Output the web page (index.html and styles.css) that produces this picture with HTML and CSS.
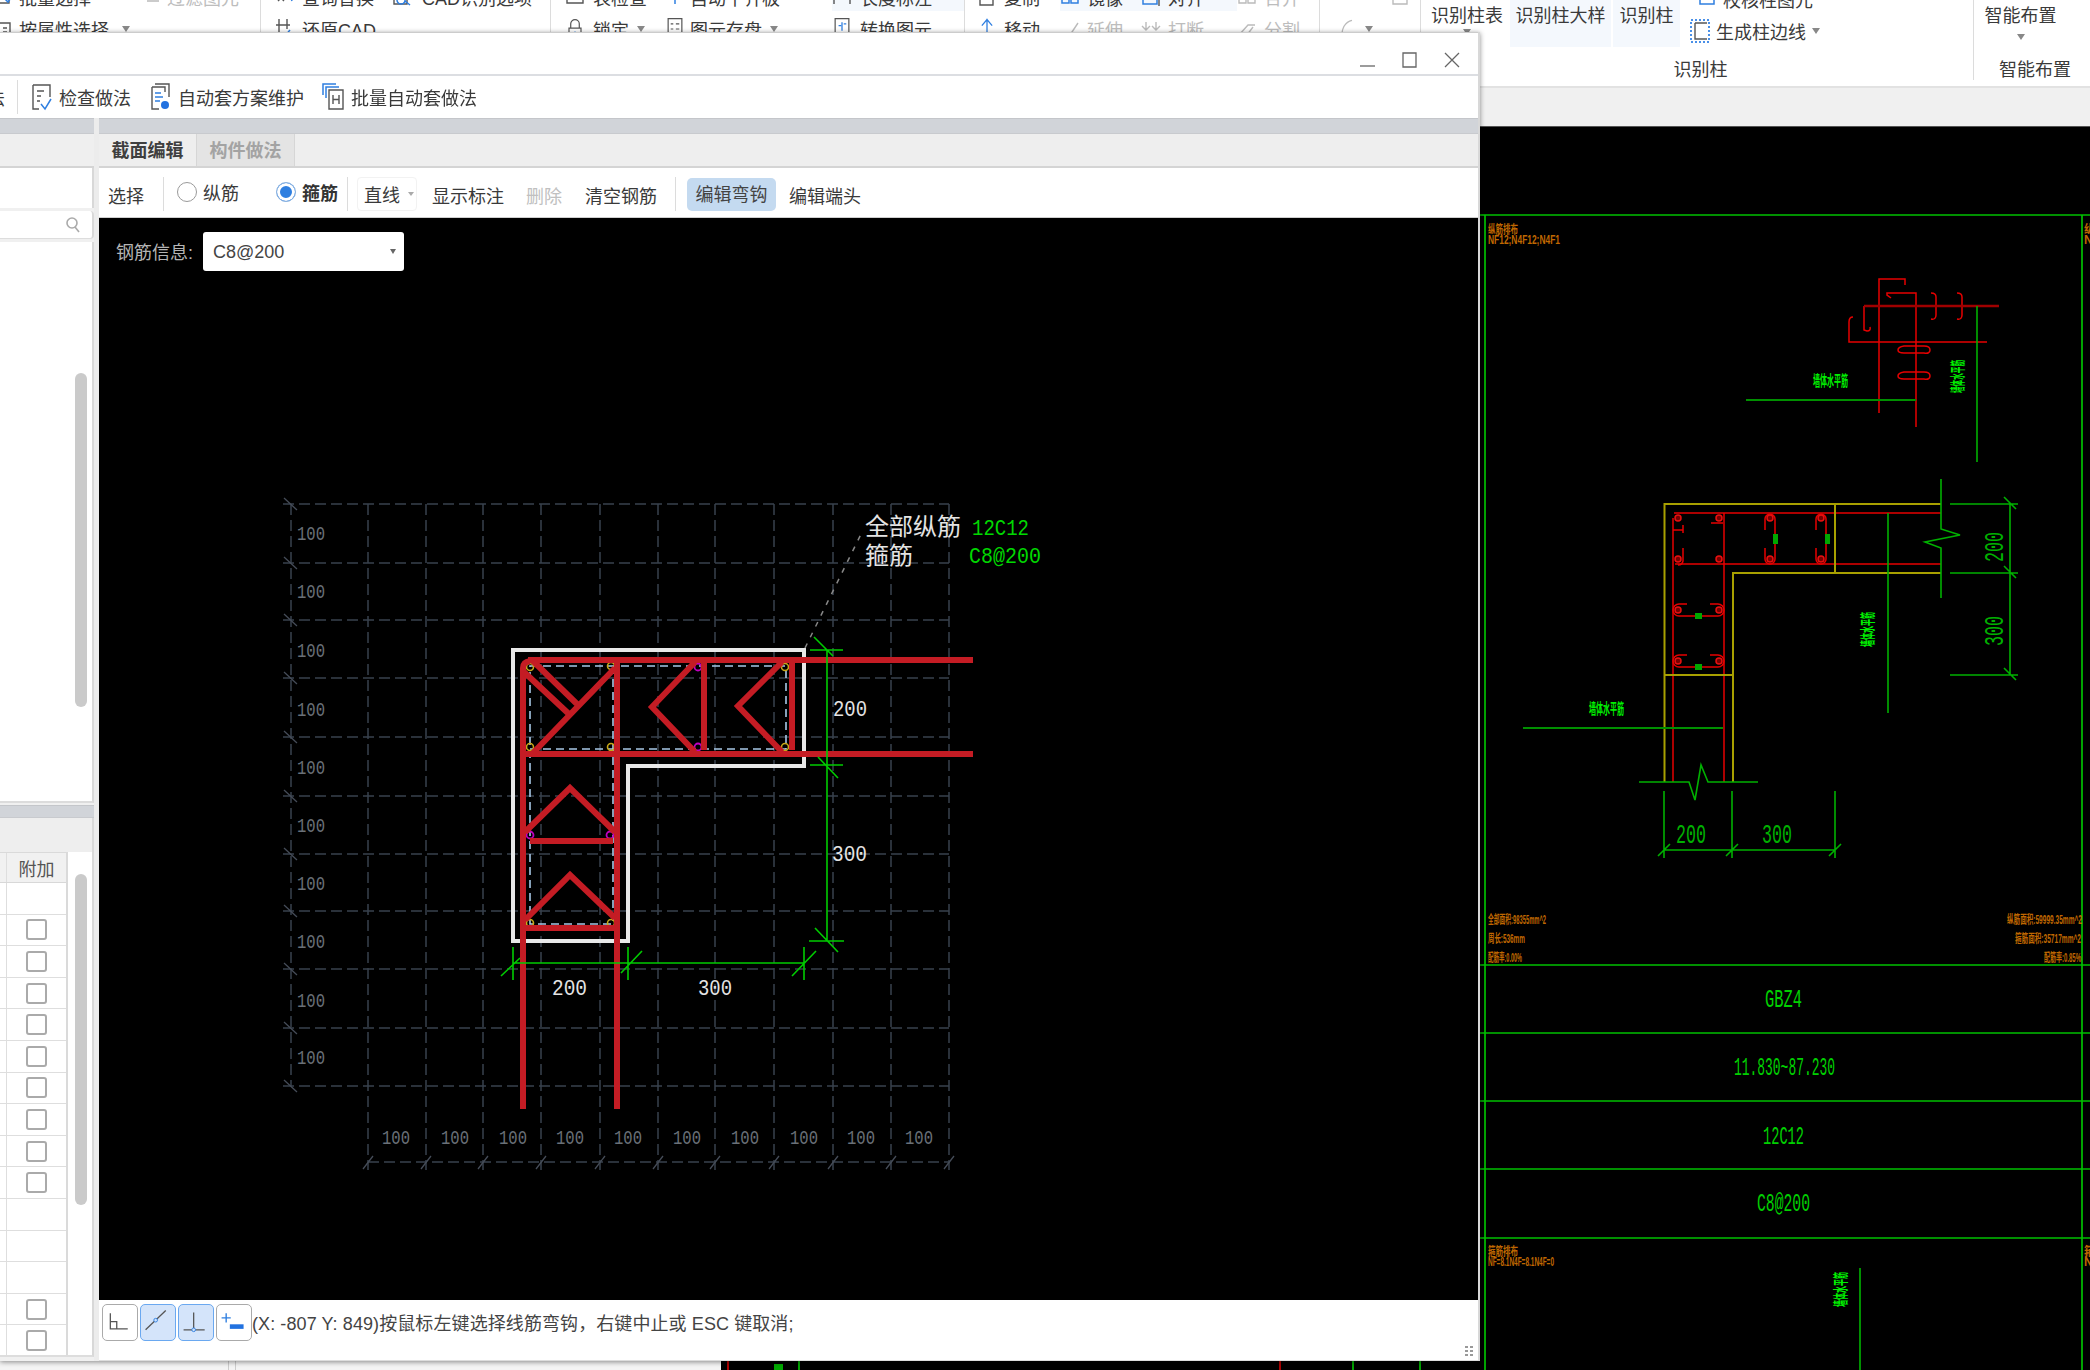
FILE: index.html
```html
<!DOCTYPE html>
<html lang="zh-CN">
<head>
<meta charset="utf-8">
<title>截面编辑</title>
<link rel="stylesheet" href="styles.css">
</head>
<body>
<div class="screen">
  <header class="ribbon">
    <section class="rb-group g1">
      <div class="rb-rows">
        <div class="rb-item"><svg class="ico-s" viewBox="0 0 13 20"><path d="M0 6h9v10H0" class="ln"/><path d="M5 12l3 3 5-7" class="bl"/></svg>批量选择</div>
        <div class="rb-item"><svg class="ico-s" viewBox="0 0 13 20"><path d="M0 4h10v14H0M3 9h4M3 13h4" class="ln"/></svg>按属性选择<i class="caret caret-far"></i></div>
        <div class="rb-item off"><svg class="ico-m" viewBox="0 0 15 20"><path d="M1 4h12M1 9h9M1 14h12" class="lnf"/></svg>过滤图元</div>
        <div class="rb-item"></div>
      </div>
    </section>
    <section class="rb-group g2">
      <div class="rb-rows">
        <div class="rb-item"><svg class="ico" viewBox="0 0 20 20"><path d="M3 14l6-6M9 14l-6-6" class="ln"/><path d="M13 4l4 10" class="bl"/></svg>查询替换</div>
        <div class="rb-item"><svg class="ico" viewBox="0 0 20 24"><path d="M4 2v20M1 8h14M12 2v10" class="ln"/><path d="M9 20l6-7" class="bl"/></svg>还原CAD</div>
        <div class="rb-item"><svg class="ico" viewBox="0 0 20 20"><path d="M2 4h13v13H2z" class="ln"/><path d="M9 9a4 4 0 1 0 .1 0M13 14l5 4" class="bl"/></svg><span class="t-gap">CAD识别选项</span></div>
        <div class="rb-item"></div>
      </div>
    </section>
    <section class="rb-group g3">
      <div class="rb-rows">
        <div class="rb-item"><svg class="ico" viewBox="0 0 20 20"><path d="M2 6h16v10H2z" class="ln"/></svg>表检查</div>
        <div class="rb-item"><svg class="ico" viewBox="0 0 20 28"><path d="M5 13V8a5 5 0 0 1 10 0v5M3 13h14v12H3z" class="ln"/><path d="M10 17v4" class="bl"/></svg>锁定<i class="caret"></i></div>
        <div class="rb-item"><svg class="ico" viewBox="0 0 20 20"><path d="M6 3l4 9M14 3l-4 9" class="ln"/><path d="M10 3v14" class="bl"/></svg><span class="t-tight">自动平齐板</span></div>
        <div class="rb-item"><svg class="ico" viewBox="0 0 20 28"><path d="M2 2h16v24H2zM5 8h3M11 8h4M5 14h3M11 14h4" class="ln"/></svg><span class="t-tight">图元存盘</span><i class="caret"></i></div>
        <div class="rb-item hl"><svg class="ico" viewBox="0 0 20 20"><path d="M2 3v14M2 10h16M18 3v14" class="ln"/></svg>长度标注</div>
        <div class="rb-item"><svg class="ico" viewBox="0 0 20 28"><path d="M2 2h16v24H2z" class="ln"/><path d="M10 6v10M6 10h3M12 8h3" class="bl"/></svg>转换图元</div>
      </div>
    </section>
    <section class="rb-group g4">
      <div class="rb-rows">
        <div class="rb-item"><svg class="ico" viewBox="0 0 20 20"><path d="M3 4h13v14H3z" class="ln"/></svg>复制</div>
        <div class="rb-item"><svg class="ico" viewBox="0 0 20 28"><path d="M10 2v22M4 10l6-7 6 7M2 22l4-4M18 22l-4-4" class="bl"/></svg>移动</div>
        <div class="rb-item hl"><svg class="ico" viewBox="0 0 20 20"><path d="M2 4h7v12H2zM11 4h7v12h-7z" class="bl"/></svg>镜像</div>
        <div class="rb-item off"><svg class="ico" viewBox="0 0 20 20"><path d="M1 16h8M10 16l8-12" class="lnf"/></svg>延伸</div>
        <div class="rb-item hl"><svg class="ico" viewBox="0 0 20 20"><path d="M2 4h14v13H2z" class="bl"/><path d="M18 2v17" class="ln"/></svg>对齐</div>
        <div class="rb-item off"><svg class="ico" viewBox="0 0 20 20"><path d="M5 3v8M1 7l4 4 4-4M15 3v8M11 7l4 4 4-4M1 16h18" class="lnf"/></svg>打断</div>
        <div class="rb-item off"><svg class="ico" viewBox="0 0 20 20"><path d="M2 4h7v12H2zM11 4h7v12h-7z" class="lnf"/></svg>合并</div>
        <div class="rb-item off"><svg class="ico" viewBox="0 0 20 20"><path d="M2 16l9-10h7M4 16h6l6-8" class="lnf"/></svg>分割</div>
      </div>
    </section>
    <section class="rb-group g5">
      <div class="rb-rows">
        <div class="rb-item"><svg class="ico" viewBox="0 0 20 20"><path d="M10 4a6 6 0 0 1 6 6M12 2l-3 2 3 3" class="lnf"/></svg></div>
        <div class="rb-item"><svg class="ico" viewBox="0 0 20 28"><path d="M5 24C5 12 9 6 17 4" class="lnf"/></svg><i class="caret caret-r"></i></div>
        <div class="rb-item"><svg class="ico" viewBox="0 0 20 20"><path d="M3 3h14v14H3z" class="lnf"/></svg></div>
        <div class="rb-item"></div>
      </div>
    </section>
    <section class="rb-group g6">
      <div class="rb-top">
        <div class="big-btn b-a"><span>识别柱表</span><i class="caret"></i></div>
        <div class="big-btn b-b hl"><span>识别柱大样</span></div>
        <div class="big-btn b-c hl"><span>识别柱</span></div>
        <div class="rb-stack">
          <div class="rb-item"><svg class="ico" viewBox="0 0 20 20"><path d="M3 5h14v10H3z" class="bl"/></svg>校核柱图元</div>
          <div class="rb-item"><svg class="ico" viewBox="0 0 20 24"><path d="M1 1h18v22H1z" class="dot"/><path d="M5 4h12M5 4v16h12" class="ln"/></svg>生成柱边线<i class="caret"></i></div>
        </div>
      </div>
      <div class="rb-label">识别柱</div>
    </section>
    <section class="rb-group g7">
      <div class="rb-top">
        <div class="big-btn b-d"><span>智能布置</span><i class="caret caret-low"></i></div>
      </div>
      <div class="rb-label">智能布置</div>
    </section>
  </header>
  <div class="rb-band"></div>
  <main class="workspace">
    <div class="ws-left">
      <div class="ws-left-a"></div>
      <div class="ws-left-b"></div>
    </div>
    <div class="ws-cad">
      <svg class="cad-svg" viewBox="721 127 1369 1243" preserveAspectRatio="none">
        <g class="k-frame">
          <path d="M1485 215V1370M2082 215V1370M1480 215H2090M1480 965H2090M1480 1033H2090M1480 1101H2090M1480 1169H2090M1480 1238H2090"/>
        </g>
        <g class="k-red">
          <path d="M1905 285v-6h-26V413"/>
          <path d="M1891 298l-4-3v-2h29V427"/>
          <path d="M1931 319q5 1 5-4v-18q0-4-5-4M1957 319q5 1 5-4v-18q0-4-5-4"/>
          <path d="M1904 346h20q6 0 6 4t-6 3h-20q-6 0-6-3t6-4zM1904 372h20q6 0 6 4t-6 3h-20q-6 0-6-3t6-4z"/>
          <path d="M1853 317q-4 0-4 5v20h138"/>
          <path d="M1864 306v24l3 1q4 0 3-4"/>
          <path class="k-dred" d="M1864 306h135"/>
          <path d="M1674 513H1941M1675 564H1941M1724 513V782"/>
          <path d="M1673 518V782"/>
          <path d="M1673 530h10M1683 525v8M1711 523h12M1683 548v13a5 5 0 0 1-5 4"/>
          <path d="M1765 530v-11a5 5 0 0 1 10 0v40a5 5 0 0 1-10 0v-11"/>
          <path d="M1816 530v-11a5 5 0 0 1 10 0v40a5 5 0 0 1-10 0v-11"/>
          <path d="M1687 604h-8a6 6 0 0 0 0 12h39a6 6 0 0 0 0-12h-8"/>
          <path d="M1687 655h-8a6 6 0 0 0 0 12h39a6 6 0 0 0 0-12h-8"/>
          <circle cx="1678" cy="518" r="3"/><circle cx="1719" cy="518" r="3"/>
          <circle cx="1678" cy="559" r="3"/><circle cx="1719" cy="559" r="3"/>
          <circle cx="1770" cy="518" r="3"/><circle cx="1821" cy="518" r="3"/>
          <circle cx="1770" cy="559" r="3"/><circle cx="1821" cy="559" r="3"/>
          <circle cx="1678" cy="610" r="3"/><circle cx="1719" cy="610" r="3"/>
          <circle cx="1678" cy="661" r="3"/><circle cx="1719" cy="661" r="3"/>
        </g>
        <g class="k-yellow">
          <path d="M1941 504H1664.500V782M1941 573H1733V782M1835 504V573M1664 675H1732"/>
        </g>
        <g class="k-green">
          <path d="M1977 306V462M1941 479V529L1960 535L1925 542L1941 548V598"/>
          <path d="M1950 504H2018M1950 573H2018M1950 675H2018M2010 504V675M2004 497l12 12M2004 566l12 12M2004 668l12 12"/>
          <path d="M1888 513V713"/>
          <path d="M1639 782H1689L1695 800L1701 765L1708 782H1758"/>
          <path d="M1664 791V858M1732 791V858M1835 791V858M1664 850H1835M1658 856l12-12M1726 856l12-12M1829 856l12-12"/>
        </g>
        <g class="k-dgreen"><path d="M1746 400H1916M1523 728H1723"/></g>
        <g class="k-blob">
          <rect x="1773" y="534" width="5" height="10"/><rect x="1825" y="534" width="5" height="10"/>
          <rect x="1695" y="613" width="7" height="6"/><rect x="1695" y="664" width="7" height="6"/>
        </g>
        <g class="t-dim">
          <text x="1691" y="843" font-size="28" textLength="30" lengthAdjust="spacingAndGlyphs" text-anchor="middle">200</text>
          <text x="1777" y="843" font-size="28" textLength="30" lengthAdjust="spacingAndGlyphs" text-anchor="middle">300</text>
          <text transform="translate(2003 547) rotate(-90)" font-size="28" textLength="30" lengthAdjust="spacingAndGlyphs" text-anchor="middle">200</text>
          <text transform="translate(2003 631) rotate(-90)" font-size="28" textLength="30" lengthAdjust="spacingAndGlyphs" text-anchor="middle">300</text>
        </g>
        <g class="t-tbl">
          <text x="1765" y="1007" font-size="26" textLength="37" lengthAdjust="spacingAndGlyphs">GBZ4</text>
          <text x="1734" y="1075" font-size="26" textLength="101" lengthAdjust="spacingAndGlyphs">11.830~87.230</text>
          <text x="1763" y="1144" font-size="26" textLength="41" lengthAdjust="spacingAndGlyphs">12C12</text>
          <text x="1757" y="1211" font-size="26" textLength="53" lengthAdjust="spacingAndGlyphs">C8@200</text>
        </g>
        <g class="t-lab">
          <text x="1813" y="386" font-size="15" textLength="35" lengthAdjust="spacingAndGlyphs">墙体水平筋</text>
          <text x="1589" y="714" font-size="15" textLength="35" lengthAdjust="spacingAndGlyphs">墙体水平筋</text>
          <text transform="translate(1963 393) rotate(-90)" font-size="15" textLength="33" lengthAdjust="spacingAndGlyphs">墙体水平筋</text>
          <text transform="translate(1873 647) rotate(-90)" font-size="15" textLength="35" lengthAdjust="spacingAndGlyphs">墙体水平筋</text>
          <text transform="translate(1846 1307) rotate(-90)" font-size="15" textLength="35" lengthAdjust="spacingAndGlyphs">墙体水平筋</text>
        </g>
        <path class="k-dgreen" d="M1860 1268V1370"/>
        <g class="t-or">
          <text x="1488" y="234" textLength="30" lengthAdjust="spacingAndGlyphs">纵筋排布</text>
          <text x="1488" y="244" textLength="72" lengthAdjust="spacingAndGlyphs">NF12;N4F12;N4F1</text>
          <text x="2084" y="234">纵</text>
          <text x="2084" y="244">N</text>
          <text x="1488" y="924" textLength="58" lengthAdjust="spacingAndGlyphs">全部面积:98355mm^2</text>
          <text x="1488" y="943" textLength="37" lengthAdjust="spacingAndGlyphs">周长:536mm</text>
          <text x="1488" y="962" textLength="34" lengthAdjust="spacingAndGlyphs">配筋率:0.00%</text>
          <text x="2007" y="924" textLength="75" lengthAdjust="spacingAndGlyphs">纵筋面积:59999.35mm^2</text>
          <text x="2015" y="943" textLength="66" lengthAdjust="spacingAndGlyphs">箍筋面积:35717mm^2</text>
          <text x="2044" y="962" textLength="37" lengthAdjust="spacingAndGlyphs">配筋率:0.85%</text>
          <text x="1488" y="1256" textLength="30" lengthAdjust="spacingAndGlyphs">箍筋排布</text>
          <text x="1488" y="1266" textLength="66" lengthAdjust="spacingAndGlyphs">NF=8.1N4F=8.1N4F=0</text>
          <text x="2084" y="1256">箍</text>
          <text x="2084" y="1266">N</text>
        </g>
        <g class="k-frame">
          <path d="M799 1361V1370M1353 1361V1370M1420 1361V1370"/>
        </g>
        <path class="k-red" d="M728 1361V1370M1280 1361V1370"/>
        <rect class="k-blob" x="774" y="1364" width="9" height="6"/>
      </svg>
    </div>
  </main>

  <div class="dialog">
    <div class="d-title">
      <svg class="win-ico" viewBox="0 0 16 16"><path d="M0 14H15"/></svg>
      <svg class="win-ico" viewBox="0 0 16 16"><path d="M1 1H14V15H1Z"/></svg>
      <svg class="win-ico" viewBox="0 0 16 16"><path d="M1 1L15 15M15 1L1 15"/></svg>
    </div>
    <div class="d-tools">
      <span class="cut-text">法</span>
      <i class="sep sep-first"></i>
      <div class="d-tool">
        <svg class="tool-ico" viewBox="0 0 22 28"><path d="M3 2H20V14M3 2V26H9M7 8H14M7 13H11M7 18H10" class="ln"/><path d="M11 21L15 26L21 16" class="bl"/></svg>
        <span>检查做法</span>
      </div>
      <div class="d-tool">
        <svg class="tool-ico" viewBox="0 0 22 28"><path d="M6 1H20V14M3 4H16V9M3 4V26H10" class="ln"/><path d="M6 10H12M6 14H14M6 18H11" class="bl"/><circle cx="16" cy="22" r="4" class="bl-f"/></svg>
        <span>自动套方案维护</span>
      </div>
      <div class="d-tool">
        <svg class="tool-ico" viewBox="0 0 22 28"><path d="M1 12V1H14" class="bl"/><path d="M4 15V4H17" class="bl"/><path d="M7 7H21V26H7Z" class="ln"/><path d="M11 12V21M17 12V21M11 16.500H17" class="ln"/></svg>
        <span>批量自动套做法</span>
      </div>
    </div>
    <div class="d-body">
      <aside class="side">
        <div class="band"></div>
        <div class="side-head"></div>
        <div class="side-box"></div>
        <div class="side-search">
          <svg class="search-ico" viewBox="0 0 14 16"><circle cx="6" cy="6" r="5"/><path d="M9 10L13 15"/></svg>
        </div>
        <div class="side-list"><div class="thumb thumb-a"></div></div>
        <div class="band band-low"></div>
        <div class="side-head side-head-low"></div>
        <div class="side-table">
          <div class="t-cols">
            <div class="t-head"><i class="c-a"></i><span class="c-b">附加</span></div>
            <div class="t-row"><i class="c-a"></i><span class="c-b"></span></div>
            <div class="t-row"><i class="c-a"></i><span class="c-b"><b class="chk"></b></span></div>
            <div class="t-row"><i class="c-a"></i><span class="c-b"><b class="chk"></b></span></div>
            <div class="t-row"><i class="c-a"></i><span class="c-b"><b class="chk"></b></span></div>
            <div class="t-row"><i class="c-a"></i><span class="c-b"><b class="chk"></b></span></div>
            <div class="t-row"><i class="c-a"></i><span class="c-b"><b class="chk"></b></span></div>
            <div class="t-row"><i class="c-a"></i><span class="c-b"><b class="chk"></b></span></div>
            <div class="t-row"><i class="c-a"></i><span class="c-b"><b class="chk"></b></span></div>
            <div class="t-row"><i class="c-a"></i><span class="c-b"><b class="chk"></b></span></div>
            <div class="t-row"><i class="c-a"></i><span class="c-b"><b class="chk"></b></span></div>
            <div class="t-row"><i class="c-a"></i><span class="c-b"></span></div>
            <div class="t-row"><i class="c-a"></i><span class="c-b"></span></div>
            <div class="t-row"><i class="c-a"></i><span class="c-b"></span></div>
            <div class="t-row"><i class="c-a"></i><span class="c-b"><b class="chk"></b></span></div>
            <div class="t-row"><i class="c-a"></i><span class="c-b"><b class="chk"></b></span></div>
          </div>
          <div class="t-scroll"><div class="thumb thumb-b"></div></div>
        </div>
      </aside>
      <div class="gutter"></div>
      <section class="editor">
        <div class="band"></div>
        <nav class="tabs">
          <span class="tab tab-on">截面编辑</span>
          <span class="tab tab-off">构件做法</span>
        </nav>
        <div class="e-tools">
          <span class="e-select">选择</span>
          <i class="sep sep-a"></i>
          <label class="radio radio-a"><i class="radio-dot"></i><span>纵筋</span></label>
          <label class="radio radio-b"><i class="radio-dot radio-on"></i><span class="strong">箍筋</span></label>
          <i class="sep sep-b"></i>
          <span class="linetype">直线<i class="caret"></i></span>
          <span class="e-btn e-show">显示标注</span>
          <span class="e-btn e-del">删除</span>
          <span class="e-btn e-clear">清空钢筋</span>
          <i class="sep sep-c"></i>
          <span class="e-active">编辑弯钩</span>
          <span class="e-btn e-end">编辑端头</span>
        </div>
        <div class="canvas">
          <svg class="canvas-svg" viewBox="99 218 1379 1082" preserveAspectRatio="none">
            <g class="c-grid">
              <path d="M283 504H949M283 563H949M283 620H949M283 678H949M283 737H949M283 796H949M283 854H949M283 911H949M283 969H949M283 1028H949M283 1086H949"/>
              <path d="M291 504V1086M368 504V1170M426 504V1170M483 504V1170M541 504V1170M600 504V1170M658 504V1170M715 504V1170M774 504V1170M833 504V1170M891 504V1170M949 504V1170"/>
              <path d="M368 1162H949"/>
            </g>
            <path class="c-tick" d="M284 498l13 12M284 557l13 12M284 614l13 12M284 672l13 12M284 731l13 12M284 790l13 12M284 848l13 12M284 905l13 12M284 963l13 12M284 1022l13 12M284 1080l13 12M363 1169l10-13M421 1169l10-13M478 1169l10-13M536 1169l10-13M595 1169l10-13M653 1169l10-13M710 1169l10-13M769 1169l10-13M828 1169l10-13M886 1169l10-13M944 1169l10-13"/>
            <g class="t-grid">
              <text x="297" y="540" textLength="28" lengthAdjust="spacingAndGlyphs">100</text>
              <text x="297" y="598" textLength="28" lengthAdjust="spacingAndGlyphs">100</text>
              <text x="297" y="657" textLength="28" lengthAdjust="spacingAndGlyphs">100</text>
              <text x="297" y="716" textLength="28" lengthAdjust="spacingAndGlyphs">100</text>
              <text x="297" y="774" textLength="28" lengthAdjust="spacingAndGlyphs">100</text>
              <text x="297" y="832" textLength="28" lengthAdjust="spacingAndGlyphs">100</text>
              <text x="297" y="890" textLength="28" lengthAdjust="spacingAndGlyphs">100</text>
              <text x="297" y="948" textLength="28" lengthAdjust="spacingAndGlyphs">100</text>
              <text x="297" y="1007" textLength="28" lengthAdjust="spacingAndGlyphs">100</text>
              <text x="297" y="1064" textLength="28" lengthAdjust="spacingAndGlyphs">100</text>
              <text x="382" y="1144" textLength="28" lengthAdjust="spacingAndGlyphs">100</text>
              <text x="441" y="1144" textLength="28" lengthAdjust="spacingAndGlyphs">100</text>
              <text x="499" y="1144" textLength="28" lengthAdjust="spacingAndGlyphs">100</text>
              <text x="556" y="1144" textLength="28" lengthAdjust="spacingAndGlyphs">100</text>
              <text x="614" y="1144" textLength="28" lengthAdjust="spacingAndGlyphs">100</text>
              <text x="673" y="1144" textLength="28" lengthAdjust="spacingAndGlyphs">100</text>
              <text x="731" y="1144" textLength="28" lengthAdjust="spacingAndGlyphs">100</text>
              <text x="790" y="1144" textLength="28" lengthAdjust="spacingAndGlyphs">100</text>
              <text x="847" y="1144" textLength="28" lengthAdjust="spacingAndGlyphs">100</text>
              <text x="905" y="1144" textLength="28" lengthAdjust="spacingAndGlyphs">100</text>
            </g>
            <path class="c-outline" d="M804 650H513V941H628V766H804Z"/>
            <path class="c-inner" d="M530 666H786V749H613V924H530ZM530 749H613M613 666V749"/>
            <g class="c-yel">
              <circle cx="530" cy="667" r="3.500"/><circle cx="611" cy="666" r="3.500"/><circle cx="530" cy="747" r="3.500"/><circle cx="611" cy="747" r="3.500"/>
              <circle cx="785" cy="667" r="3.500"/><circle cx="785" cy="747" r="3.500"/><circle cx="530" cy="923" r="3.500"/><circle cx="611" cy="923" r="3.500"/>
            </g>
            <g class="c-mag">
              <circle cx="698" cy="667" r="3.500"/><circle cx="698" cy="747" r="3.500"/><circle cx="530" cy="835" r="3.500"/><circle cx="610" cy="835" r="3.500"/>
            </g>
            <g class="c-bar">
              <path d="M528 660H973M523 754H973M523 672V1109M617 660V1109M792 662V750M704 663V750"/>
              <path d="M523 680V668Q523 662 530 661"/>
              <path d="M533 661L578 705M524 672L570 715M615 668L533 753"/>
              <path d="M695 662L652 707L695 752M782 662L738 706L782 752"/>
              <path d="M525 832L570 788L615 832M530 841H613M525 920L570 875L615 918M525 928H615"/>
            </g>
            <g class="c-dim">
              <path d="M827 650V941M810 650H843M810 765H843M809 941H844M814 637L833 656M818 757L838 778M815 928L838 952"/>
              <path d="M513 963H804M513 947V980M628 947V980M804 947V980M501 976L520 958M621 973L642 951M792 976L816 951"/>
            </g>
            <path class="c-leader" d="M805 648L863 530"/>
            <g class="t-white">
              <text x="833" y="716" textLength="34" lengthAdjust="spacingAndGlyphs">200</text>
              <text x="832" y="861" textLength="35" lengthAdjust="spacingAndGlyphs">300</text>
              <text x="552" y="995" textLength="35" lengthAdjust="spacingAndGlyphs">200</text>
              <text x="698" y="995" textLength="34" lengthAdjust="spacingAndGlyphs">300</text>
            </g>
            <g class="t-cn">
              <text x="865" y="535">全部纵筋</text>
              <text x="865" y="564">箍筋</text>
            </g>
            <g class="t-gcn">
              <text x="972" y="535" textLength="57" lengthAdjust="spacingAndGlyphs">12C12</text>
              <text x="969" y="563" textLength="72" lengthAdjust="spacingAndGlyphs">C8@200</text>
            </g>
          </svg>
          <div class="rebar-info">
            <span class="rebar-label">钢筋信息:</span>
            <span class="combo"><span class="combo-text">C8@200</span><i class="caret caret-dark"></i></span>
          </div>
        </div>
        <footer class="status">
          <div class="status-row">
            <span class="snap"><svg viewBox="0 0 36 37"><path d="M8 9V26H27M8 18H15V26" class="ln"/></svg></span>
            <span class="snap snap-on"><svg viewBox="0 0 36 37"><path d="M5 27L27 6" class="ln"/><circle cx="16" cy="16.500" r="2" class="bl-o"/></svg></span>
            <span class="snap snap-on"><svg viewBox="0 0 36 37"><path d="M16 8V27M5 27H28" class="ln"/><circle cx="16" cy="27" r="2" class="bl-o"/></svg></span>
            <span class="snap"><svg viewBox="0 0 36 37"><path d="M10 9V19M5 14H15" class="bl"/><path d="M14 21H29V26H14Z" class="bl-f"/></svg></span>
            <span class="status-text">(X: -807 Y: 849)按鼠标左键选择线筋弯钩，右键中止或 ESC 键取消;</span>
          </div>
          <div class="grip"><i></i><i></i><i></i></div>
        </footer>
      </section>
    </div>
  </div>
</div>
</body>
</html>
```

FILE: styles.css
```css
* { box-sizing: border-box; }
html, body { margin: 0; padding: 0; background: #000; }
body { width: 2090px; height: 1370px; overflow: hidden; font-family: "Liberation Sans", "Noto Sans CJK SC", sans-serif; font-size: 18px; color: #3a3a3a; }
i, b { display: block; font-style: normal; font-weight: normal; }
svg { display: block; flex: none; fill: none; }

.screen { position: relative; width: 2090px; height: 1370px; display: flex; flex-direction: column; overflow: hidden; filter: blur(.55px); }

/* icon strokes */
.ln { stroke: #555; stroke-width: 1.4; fill: none; }
.lnf { stroke: #bbb; stroke-width: 1.4; fill: none; }
.bl { stroke: #2f7fe0; stroke-width: 1.5; fill: none; }
.bl-f { fill: #2272e0; }
.bl-o { fill: #cfe2fb; stroke: #2f7fe0; stroke-width: 1; }
.dot { stroke: #4a90e8; stroke-width: 2; stroke-dasharray: 2 2; fill: none; }

/* ribbon behind the dialog */
.ribbon { height: 88px; flex: none; background: #fff; display: flex; border-bottom: 2px solid #e2e2e2; overflow: hidden; }
.rb-group { height: 80px; border-right: 1px solid #dcdcdc; flex: none; }
.g1 { width: 261px; }
.g2 { width: 290px; padding-left: 14px; }
.g3 { width: 414px; padding-left: 14px; }
.g4 { width: 355px; padding-left: 12px; }
.g5 { width: 101px; padding-left: 16px; }
.g6 { width: 553px; padding-left: 5px; display: flex; flex-direction: column; }
.g7 { width: 115px; border-right: 0; display: flex; flex-direction: column; }
.rb-rows { display: grid; grid-auto-flow: column; grid-template-rows: 32px 32px; margin-top: -19px; }
.g1 .rb-rows { grid-template-columns: 146px 1fr; }
.g2 .rb-rows { grid-template-columns: 117px 1fr; }
.g3 .rb-rows { grid-template-columns: 100px 167px 1fr; }
.g4 .rb-rows { grid-template-columns: 83px 81px 96px 1fr; }
.g5 .rb-rows { grid-template-columns: 54px 1fr; }
.rb-item { display: flex; align-items: center; gap: 7px; white-space: nowrap; height: 28px; align-self: center; }
.g1 .rb-item { gap: 6px; }
.g3 .rb-item { gap: 8px; }
.g3 .t-tight { margin-left: -3px; }
.g2 .t-gap { margin-left: 3px; }
.off { color: #bdbdbd; }
.hl { background: #f4f8fd; }
.ico { width: 20px; height: 24px; }
.ico-s { width: 13px; height: 20px; }
.ico-m { width: 15px; height: 20px; }
.caret { width: 0; height: 0; border-left: 4px solid transparent; border-right: 4px solid transparent; border-top: 6px solid #888; flex: none; }
.caret-far { margin-left: 7px; }
.caret-r { margin-left: 2px; }
.rb-top { height: 69px; display: flex; margin-top: -11px; flex: none; }
.big-btn { display: flex; flex-direction: column; align-items: center; padding-top: 12px; gap: 2px; height: 58px; white-space: nowrap; }
.b-a { width: 82px; }
.b-b { width: 101px; margin-left: 2px; }
.b-c { width: 67px; margin-left: 2px; }
.b-d { width: 73px; margin-left: 10px; }
.b-d .caret-low { margin-top: 5px; }
.rb-stack { margin-left: 10px; display: flex; flex-direction: column; margin-top: -4px; gap: 4px; }
.rb-stack .rb-item { gap: 6px; }
.rb-label { text-align: center; height: 24px; line-height: 24px; }
.g6 .rb-label { width: 561px; margin-left: -6px; }
.g7 .rb-label { padding-left: 7px; }
.rb-band { height: 39px; flex: none; background: #f0f0f0; border-bottom: 1px solid #555; }

/* workspace */
.workspace { flex: 1; display: flex; min-height: 0; }
.ws-left { width: 721px; flex: none; display: flex; background: #f4f4f4; }
.ws-left-a { width: 229px; border-right: 1px solid #ccc; }
.ws-left-b { width: 7px; border-right: 1px solid #ccc; }
.ws-cad { flex: 1; background: #000; }
.cad-svg { width: 1369px; height: 1243px; }
.k-frame path { stroke: #00c000; stroke-width: 1.7; fill: none; }
.k-red, .k-red path, .k-red circle { stroke: #e60000; stroke-width: 1.5; fill: none; }
.k-red .k-dred { stroke: #a00000; stroke-width: 2.5; }
.k-red circle { stroke: #e81010; fill: #700; }
.k-yellow path { stroke: #a8a000; stroke-width: 2; fill: none; }
.k-green path { stroke: #00b000; stroke-width: 1.6; fill: none; }
.k-dgreen, .k-dgreen path { stroke: #009000; stroke-width: 2; fill: none; }
.k-blob, .k-blob rect { fill: #00a800; }
.t-dim text { fill: #00b000; font-family: "Liberation Mono", monospace; }
.t-tbl text { fill: #00d000; font-family: "Liberation Mono", monospace; }
.t-lab text { fill: #00f000; font-weight: 700; font-family: "Noto Sans CJK SC", sans-serif; }
.t-or text { fill: #c06800; font-size: 12px; font-weight: 700; font-family: "Liberation Sans", "Noto Sans CJK SC", sans-serif; }

/* dialog window */
.dialog { position: absolute; left: 0; top: 32px; width: 1480px; height: 1329px; background: #f0f0f0; border-right: 2px solid #d8d8d8; box-shadow: 0 1px 5px rgba(0, 0, 0, .45); display: flex; flex-direction: column; }
.d-title { height: 44px; flex: none; background: #fff; border-bottom: 2px solid #dcdee2; border-top: 1px solid #ccc; display: flex; justify-content: flex-end; align-items: center; gap: 26px; padding: 12px 18px 0 0; }
.win-ico { width: 16px; height: 16px; }
.win-ico path { stroke: #666; stroke-width: 1.3; fill: none; }
.d-tools { height: 42px; flex: none; background: #fff; display: flex; align-items: center; }
.cut-text { width: 30px; margin-left: -13px; flex: none; }
.sep { width: 1px; height: 34px; background: #dcdcdc; flex: none; }
.sep-first { margin-right: 12px; }
.d-tool { display: flex; align-items: center; gap: 7px; margin-right: 18px; white-space: nowrap; }
.tool-ico { width: 22px; height: 28px; }
.d-body { flex: 1; display: flex; min-height: 0; }
.band { height: 16px; flex: none; background: #d1d4d9; border-top: 1px solid #c4c6ca; border-bottom: 1px solid #c8cace; }

/* left panel */
.side { width: 94px; flex: none; display: flex; flex-direction: column; }
.side-head { height: 34px; flex: none; background: #efefef; border-bottom: 2px solid #d4d4d4; }
.side-box { height: 40px; flex: none; background: #fff; border-right: 2px solid #d8d8d8; }
.side-search { height: 28px; flex: none; margin-top: 3px; background: #fff; border-right: 2px solid #d8d8d8; border-bottom: 1px solid #ddd; display: flex; align-items: center; padding-left: 66px; border-radius: 0 4px 4px 0; }
.search-ico { width: 14px; height: 16px; }
.search-ico circle, .search-ico path { stroke: #aaa; stroke-width: 1.6; fill: none; }
.side-list { height: 561px; flex: none; margin-top: 3px; background: #fff; border-right: 2px solid #d8d8d8; border-bottom: 2px solid #dcdcdc; padding: 131px 0 0 75px; }
.thumb { width: 12px; background: #cacaca; border-radius: 6px; }
.thumb-a { height: 334px; }
.thumb-b { height: 331px; margin-top: 22px; margin-left: 7px; }
.band-low { margin-top: 2px; height: 13px; }
.side-head-low { height: 34px; border-bottom: 0; background: #eeeeee; border-right: 2px solid #d8d8d8; }
.side-table { height: 505px; flex: none; display: flex; background: #fff; border-right: 2px solid #d8d8d8; border-bottom: 2px solid #ddd; overflow: hidden; }
.t-cols { width: 68px; flex: none; border-right: 2px solid #dadada; border-top: 1px solid #dadada; }
.t-head { display: flex; height: 30px; background: #f1f1f1; border-bottom: 1px solid #d8d8d8; }
.t-row { display: flex; height: 31.6px; border-bottom: 1px solid #dedede; }
.c-a { width: 7px; flex: none; border-right: 1px solid #dedede; }
.c-b { flex: 1; display: flex; align-items: center; justify-content: center; font-size: 18px; color: #555; }
.chk { width: 21px; height: 21px; border: 2px solid #aaa; border-radius: 3px; background: #fff; }
.gutter { width: 5px; flex: none; background: #ececec; }

/* editor */
.editor { flex: 1; min-width: 0; display: flex; flex-direction: column; }
.tabs { height: 34px; flex: none; background: #eeeeee; border-bottom: 2px solid #d4d4d4; display: flex; }
.tab { height: 32px; line-height: 34px; width: 97px; text-align: center; font-weight: 700; flex: none; }
.tab-on { color: #3f3f3f; }
.tab-off { color: #a3a3a3; background: #e4e4e4; border-left: 1px solid #d6d6d6; border-right: 1px solid #d6d6d6; width: 99px; }
.e-tools { height: 50px; flex: none; background: #fff; border-bottom: 1px solid #cfcfcf; display: flex; align-items: center; padding-top: 2px; white-space: nowrap; }
.e-select { margin-left: 9px; width: 36px; padding-top: 2px; flex: none; }
.sep-a { margin-left: 19px; }
.radio { display: flex; align-items: center; gap: 6px; margin-top: -3px; flex: none; }
.radio-a { margin-left: 13px; }
.radio-b { margin-left: 37px; gap: 6px; }
.radio-dot { width: 20px; height: 20px; border: 1.5px solid #9a9a9a; border-radius: 50%; background: #fff; }
.radio-on { border-color: #8db4e0; box-shadow: inset 0 0 0 3px #fff; background: #2f7fe0; }
.strong { font-weight: 700; color: #333; }
.sep-b { margin-left: 9px; }
.linetype { margin-left: 9px; width: 60px; padding-left: 6px; height: 34px; display: flex; align-items: center; gap: 8px; border: 1px solid #f2f2f2; border-radius: 4px; flex: none; }
.linetype .caret { border-left-width: 3px; border-right-width: 3px; border-top-width: 4px; border-top-color: #aaa; }
.e-btn { padding-top: 2px; flex: none; }
.e-show { margin-left: 15px; }
.e-del { margin-left: 22px; color: #c0c0c0; }
.e-clear { margin-left: 23px; }
.sep-c { margin-left: 18px; }
.e-active { margin-left: 11px; width: 89px; height: 33px; line-height: 34px; text-align: center; background: #c4daf0; border-radius: 5px; flex: none; margin-top: 2px; color: #444; }
.e-end { margin-left: 13px; }

.canvas { flex: 1; position: relative; background: #000; min-height: 0; overflow: hidden; }
.canvas-svg { position: absolute; left: 0; top: 0; width: 1379px; height: 1082px; }
.rebar-info { position: relative; display: flex; align-items: center; padding: 14px 0 0 17px; }
.rebar-label { color: #b4b4b4; width: 87px; flex: none; margin-top: -1px; }
.combo { width: 201px; height: 39px; background: #fff; border-radius: 3px; display: flex; align-items: center; justify-content: space-between; padding: 0 8px 0 10px; color: #444; }
.combo-text { padding-top: 2px; }
.caret-dark { border-left-width: 3px; border-right-width: 3px; border-top-width: 5px; border-top-color: #666; }

.c-grid path { stroke: #39414e; stroke-width: 1.5; stroke-dasharray: 11 5; fill: none; }
.c-tick { stroke: #454c58; stroke-width: 1.3; fill: none; }
.t-grid text { fill: #6a7078; font-size: 21px; font-family: "Liberation Mono", monospace; }
.c-outline { stroke: #e8e8e8; stroke-width: 4; fill: none; }
.c-inner { stroke: #a8c8e6; stroke-width: 1.6; stroke-dasharray: 8 5; fill: none; }
.c-bar path { stroke: #c41c24; stroke-width: 6; fill: none; }
.c-yel circle { stroke: #c8a818; stroke-width: 1.6; fill: none; }
.c-mag circle { stroke: #c000c0; stroke-width: 1.8; fill: none; }
.c-dim path { stroke: #00cc00; stroke-width: 1.6; fill: none; }
.c-leader { stroke: #888; stroke-width: 1.5; stroke-dasharray: 5 7; fill: none; }
.t-white text { fill: #e4e4e4; font-size: 22px; font-family: "Liberation Mono", monospace; }
.t-cn text { fill: #e4e4e4; font-size: 24px; font-family: "Noto Sans CJK SC", sans-serif; }
.t-gcn text { fill: #00d800; font-size: 22px; font-family: "Liberation Mono", monospace; }

/* status bar */
.status { height: 61px; flex: none; background: #fff; position: relative; padding: 4px 0 0 3px; border-bottom: 1px solid #ddd; }
.status-row { display: flex; align-items: center; gap: 2px; }
.snap { width: 36px; height: 37px; border: 1.5px solid #aaa; border-radius: 5px; background: #fff; flex: none; }
.snap svg { width: 33px; height: 34px; }
.snap-on { background: #d4e4fa; border-color: #6aa8f0; }
.status-text { margin-left: -2px; margin-top: -2px; white-space: nowrap; color: #444; letter-spacing: .09px; }
.grip { position: absolute; right: 5px; bottom: 4px; display: flex; flex-direction: column; gap: 2px; }
.grip i { width: 8px; height: 2px; background-image: linear-gradient(90deg, #999 3px, transparent 3px); background-size: 5px 2px; }
```
